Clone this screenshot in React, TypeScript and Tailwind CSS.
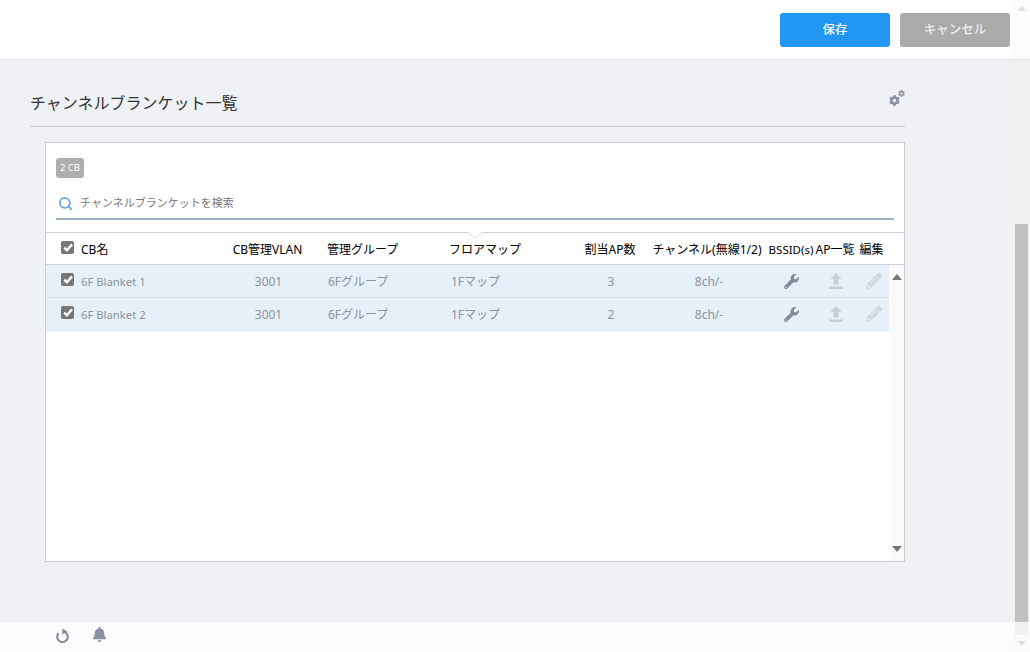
import React from "react";
import { FaWrench, FaPencilAlt, FaBell, FaCog } from "react-icons/fa";
import { Search } from "lucide-react";

const font = { fontFamily: '"Noto Sans", "Noto Sans CJK JP", sans-serif' };

function Check({ lift }: { lift: string }) {
  return (
    <span className={`flex h-[13px] w-[13px] shrink-0 items-center justify-center rounded-[2px] bg-[#777777] ${lift}`}>
      <svg viewBox="0 0 12 12" className="h-[12px] w-[12px]">
        <path d="M2.2 5.6 L4.9 8.2 L10 2.4" fill="none" stroke="#ffffff" strokeWidth="2.4" />
      </svg>
    </span>
  );
}

function Upload() {
  return (
    <svg viewBox="0 0 14 16" className="h-4 w-[14px]" fill="#c9ced4">
      <path d="M7 0 L12.5 6 L9.5 6 L9.5 11.5 L4.5 11.5 L4.5 6 L1.5 6 Z" />
      <rect x="0" y="13.5" width="14" height="2.5" />
    </svg>
  );
}

function Refresh() {
  return (
    <svg viewBox="0 0 16 16" className="h-[15px] w-[15px]" fill="none">
      <path d="M3.8 5.6 A5.6 5.6 0 1 0 8.4 3.8" stroke="#858b9e" strokeWidth="2.2" />
      <path d="M7.8 0.6 L13 3.6 L7.8 7 Z" fill="#858b9e" />
    </svg>
  );
}

const grid = "grid grid-cols-[184px_75px_123px_144px_76px_118px_50px_38px_35px] items-center";

const Center = ({ children, className = "" }: { children: React.ReactNode; className?: string }) => (
  <div className={`flex justify-center whitespace-nowrap ${className}`}>{children}</div>
);

function Row({ name, ap }: { name: string; ap: string }) {
  return (
    <div className={`${grid} h-[33px] border-b border-[#d9e2ea] bg-[#e6f0f9] pt-[2px] text-xs text-[#8f929c]`}>
      <div className="flex items-center gap-[7px] pl-[15px]">
        <Check lift="-mt-[5px]" />
        <span className="text-[11.3px]">{name}</span>
      </div>
      <Center className="pl-[2px]">3001</Center>
      <div className="pl-[23px]">6Fグループ</div>
      <div className="pl-[23px]">1Fマップ</div>
      <Center className="pl-[2px]">{ap}</Center>
      <Center className="pl-1">8ch/-</Center>
      <Center className="-mt-[2px]">
        <FaWrench className="h-[15px] w-[15px] text-[#858b9e]" />
      </Center>
      <Center className="-mt-[2px] pl-[2px]">
        <Upload />
      </Center>
      <Center className="-mt-[2px] pl-1">
        <FaPencilAlt className="h-4 w-4 text-[#d3d6da]" />
      </Center>
    </div>
  );
}

export default function App() {
  return (
    <div className="flex h-[652px] w-[1030px] overflow-hidden bg-[#f0f1f5]" style={font}>
      <div className="flex w-[1013px] flex-col">
        <header className="flex h-[60px] shrink-0 items-start justify-end gap-[10px] border-b border-[#e5e6ea] bg-white pr-[3px] pt-[13px]">
          <button className="h-[34px] w-[110px] rounded-[3px] bg-[#2196f3] text-[12.5px] font-medium text-white">保存</button>
          <button className="h-[34px] w-[110px] rounded-[3px] bg-[#aaaaaa] text-[12.5px] font-medium text-[#eeeeee]">キャンセル</button>
        </header>

        <main className="flex-1 pl-[30px]">
          <div className="w-[875px]">
            <div className="flex h-[67px] items-center justify-between border-b border-[#c8cbd0] pt-[19px]">
              <h1 className="text-base font-normal leading-none text-[#333333]">チャンネルブランケット一覧</h1>
              <div className="relative mb-[9px] h-4 w-4 text-[#8b90a3]">
                <FaCog className="absolute bottom-0 left-0 h-[11px] w-[11px]" />
                <FaCog className="absolute right-0 top-0 h-[7px] w-[7px]" />
              </div>
            </div>

            <section className="ml-[15px] mt-[15px] flex h-[420px] flex-col border border-[#c8cdd0] bg-white">
              <div className="px-[10px] pt-[15px]">
                <span className="flex h-5 w-7 items-center justify-center rounded-[3px] bg-[#aeaeae] text-[9.5px] text-white">2 CB</span>
                <div className="mt-[11px] flex h-[31px] items-center gap-[7px] border-b-2 border-[#9db2c6] pl-[2px]">
                  <Search className="h-[15px] w-[15px] text-[#6ea6d9]" strokeWidth={3} />
                  <span className="text-[11px] text-[#777777]">チャンネルブランケットを検索</span>
                </div>
              </div>

              <div className={`${grid} relative mt-[12px] h-[33px] border-y border-[#cfd2d6] pt-[2px] text-xs text-black`}>
                <div className="flex items-center gap-[7px] pl-[15px]">
                  <Check lift="-mt-[4px]" />
                  <span>CB名</span>
                </div>
                <Center>CB管理VLAN</Center>
                <div className="whitespace-nowrap pl-[22px]">管理グループ</div>
                <div className="whitespace-nowrap pl-[21px]">フロアマップ</div>
                <Center>割当AP数</Center>
                <Center>チャンネル(無線1/2)</Center>
                <Center className="text-[11.5px]">BSSID(s)</Center>
                <Center>AP一覧</Center>
                <Center>編集</Center>
                <svg viewBox="0 0 14 7" className="absolute left-[422px] top-[-1px] h-[7px] w-[14px]">
                  <path d="M0 0 L7 6.5 L14 0" fill="#ffffff" stroke="#dcdee1" strokeWidth="1" />
                </svg>
              </div>

              <div className="flex min-h-0 flex-1">
                <div className="flex-1">
                  <Row name="6F Blanket 1" ap="3" />
                  <Row name="6F Blanket 2" ap="2" />
                </div>
                <div className="flex w-[15px] flex-col items-center justify-between bg-[#fafafa] py-[9px]">
                  <svg viewBox="0 0 10 6" className="h-[6px] w-[10px]"><path d="M5 0 L10 6 L0 6 Z" fill="#777777" /></svg>
                  <svg viewBox="0 0 10 6" className="h-[6px] w-[10px]"><path d="M0 0 L10 0 L5 6 Z" fill="#777777" /></svg>
                </div>
              </div>
            </section>
          </div>
        </main>

        <footer className="flex h-[30px] shrink-0 items-start gap-[22px] bg-[#fcfcfd] pl-[55px] pt-[5px] text-[#8b90a3]">
          <div className="mt-[1px]"><Refresh /></div>
          <FaBell className="h-[15px] w-[15px]" />
        </footer>
      </div>

      <div className="flex w-[17px] flex-col">
        <div className="flex h-[60px] shrink-0 justify-center border-b border-[#e5e6ea] bg-[#fcfcfc] pl-[1px] pt-[6px]">
          <svg viewBox="0 0 10 6" className="h-[5px] w-[8px]"><path d="M5 0 L10 6 L0 6 Z" fill="#dddddd" /></svg>
        </div>
        <div className="flex flex-1 flex-col bg-[#f0f0f0]">
          <div className="h-[164px] shrink-0" />
          <div className="ml-[2px] h-[398px] w-[13px] shrink-0 bg-[#c1c1c1]" />
        </div>
        <div className="h-[13px] shrink-0 bg-[#fbfbfb] pl-[2px]">
          <div className="h-full w-[13px] bg-[#f0f0f0]" />
        </div>
        <div className="flex h-[17px] shrink-0 justify-center bg-[#fbfbfb] pl-[1px] pt-[6px]">
          <svg viewBox="0 0 10 6" className="h-[5px] w-[8px]"><path d="M0 0 L10 0 L5 6 Z" fill="#dddddd" /></svg>
        </div>
      </div>
    </div>
  );
}
